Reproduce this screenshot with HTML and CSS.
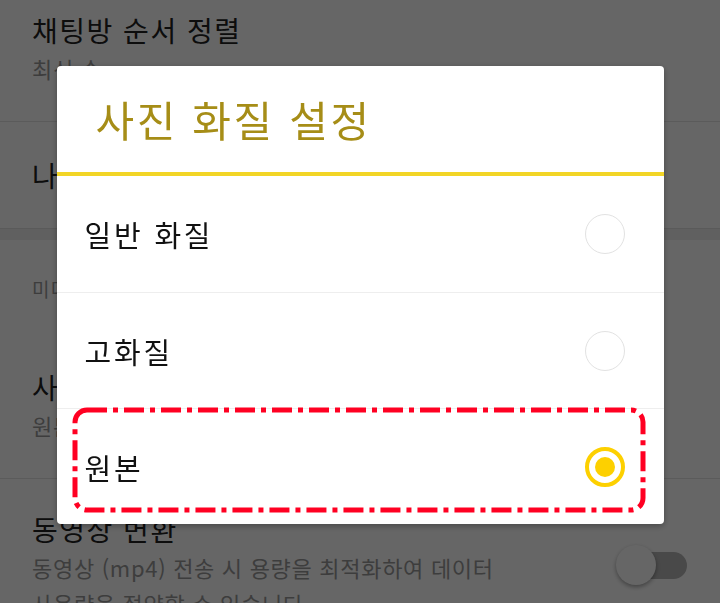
FILE: index.html
```html
<!DOCTYPE html>
<html lang="ko">
<head>
<meta charset="utf-8">
<title>사진 화질 설정</title>
<link rel="stylesheet" href="styles.css">
</head>
<body>
<main class="settings">
  <div class="item item-first">
    <div class="item-title">채팅방 순서 정렬</div>
    <div class="item-sub">최신 순</div>
  </div>
  <div class="item item-single">
    <div class="item-title">나와의 채팅방</div>
  </div>
  <div class="section-gap"></div>
  <div class="section-header">미디어</div>
  <div class="item">
    <div class="item-title">사진 화질</div>
    <div class="item-sub">원본</div>
  </div>
  <div class="item item-toggle">
    <div class="item-text">
      <div class="item-title">동영상 변환</div>
      <div class="item-sub">동영상 (mp4) 전송 시 용량을 최적화하여 데이터<br>사용량을 절약할 수 있습니다.</div>
    </div>
    <div class="switch"><div class="switch-thumb"></div></div>
  </div>
</main>

<div class="scrim">
  <div class="dialog">
    <div class="dialog-title">사진 화질 설정</div>
    <div class="option"><span class="option-label">일반 화질</span><span class="radio"></span></div>
    <div class="option"><span class="option-label">고화질</span><span class="radio"></span></div>
    <div class="option"><span class="option-label">원본</span><span class="radio radio-checked"></span></div>
    <svg class="highlight" width="580" height="112" viewBox="0 0 580 112">
      <rect x="6" y="6" width="568" height="100" rx="12" ry="12" fill="none" stroke="#ff0022" stroke-width="5" stroke-dasharray="20 6 5 6"/>
    </svg>
  </div>
</div>
</body>
</html>
```
FILE: styles.css
```css
html, body {
  margin: 0;
  padding: 0;
}
body {
  width: 720px;
  height: 603px;
  overflow: hidden;
  background: #ffffff;
  font-family: "Noto Sans CJK KR", "Noto Sans", sans-serif;
  color: #222;
}

.settings {
  display: flex;
  flex-direction: column;
}

.item {
  padding: 30px 32px 35px 32px;
  border-bottom: 1px solid #e4e4e4;
}
.item-first {
  padding-top: 10px;
}
.item-single {
  padding-top: 33px;
  padding-bottom: 33px;
  border-bottom: none;
}
.item-title {
  font-size: 28px;
  line-height: 40px;
  letter-spacing: 1.5px;
  color: #222;
  white-space: nowrap;
}
.item-sub {
  font-size: 22px;
  line-height: 36px;
  letter-spacing: 0.7px;
  color: #9a9a9a;
  white-space: nowrap;
}

.section-gap {
  height: 11px;
  border-top: 1px solid #e0e0e0;
  background: #efefef;
}
.section-header {
  padding: 35px 32px 34px 32px;
  font-size: 19px;
  line-height: 28px;
  letter-spacing: 1px;
  color: #9a9a9a;
}

.item-toggle {
  display: flex;
  align-items: center;
  justify-content: space-between;
  border-bottom: none;
}
.switch {
  position: relative;
  width: 70px;
  height: 27px;
  margin-right: 1px;
  border-radius: 14px;
  background: #b6b6b6;
  flex: none;
}
.switch-thumb {
  position: absolute;
  left: -1px;
  top: -7px;
  width: 40px;
  height: 40px;
  border-radius: 50%;
  background: #ffffff;
  box-shadow: 0 2px 4px rgba(0, 0, 0, 0.35);
}

/* dialog */
.scrim {
  position: fixed;
  inset: 0;
  background: rgba(0, 0, 0, 0.6);
  display: flex;
  justify-content: center;
  align-items: flex-start;
  padding-top: 66px;
}
.dialog {
  position: relative;
  width: 607px;
  background: #ffffff;
  border-radius: 4px;
  box-shadow: 0 2px 6px rgba(0, 0, 0, 0.3);
}
.dialog-title {
  height: 106px;
  display: flex;
  align-items: center;
  padding-left: 39px;
  font-size: 42px;
  line-height: 1;
  letter-spacing: 2.6px;
  color: #a68d17;
  border-bottom: 4px solid #f2d526;
}
.option {
  height: 116px;
  display: flex;
  align-items: center;
  justify-content: space-between;
  padding: 0 39px 0 28px;
  box-sizing: border-box;
}
.option + .option {
  border-top: 1px solid #eeeeee;
}
.option-label {
  font-size: 29px;
  letter-spacing: 2.8px;
  color: #111;
}
.radio {
  width: 40px;
  height: 40px;
  box-sizing: border-box;
  border-radius: 50%;
  border: 1.5px solid #e2e2e2;
  display: flex;
  align-items: center;
  justify-content: center;
}
.radio-checked {
  border: 4px solid #fdd000;
}
.radio-checked::after {
  content: "";
  width: 20px;
  height: 20px;
  border-radius: 50%;
  background: #fdd000;
}
.highlight {
  position: absolute;
  left: 12px;
  top: 338px;
}
```
